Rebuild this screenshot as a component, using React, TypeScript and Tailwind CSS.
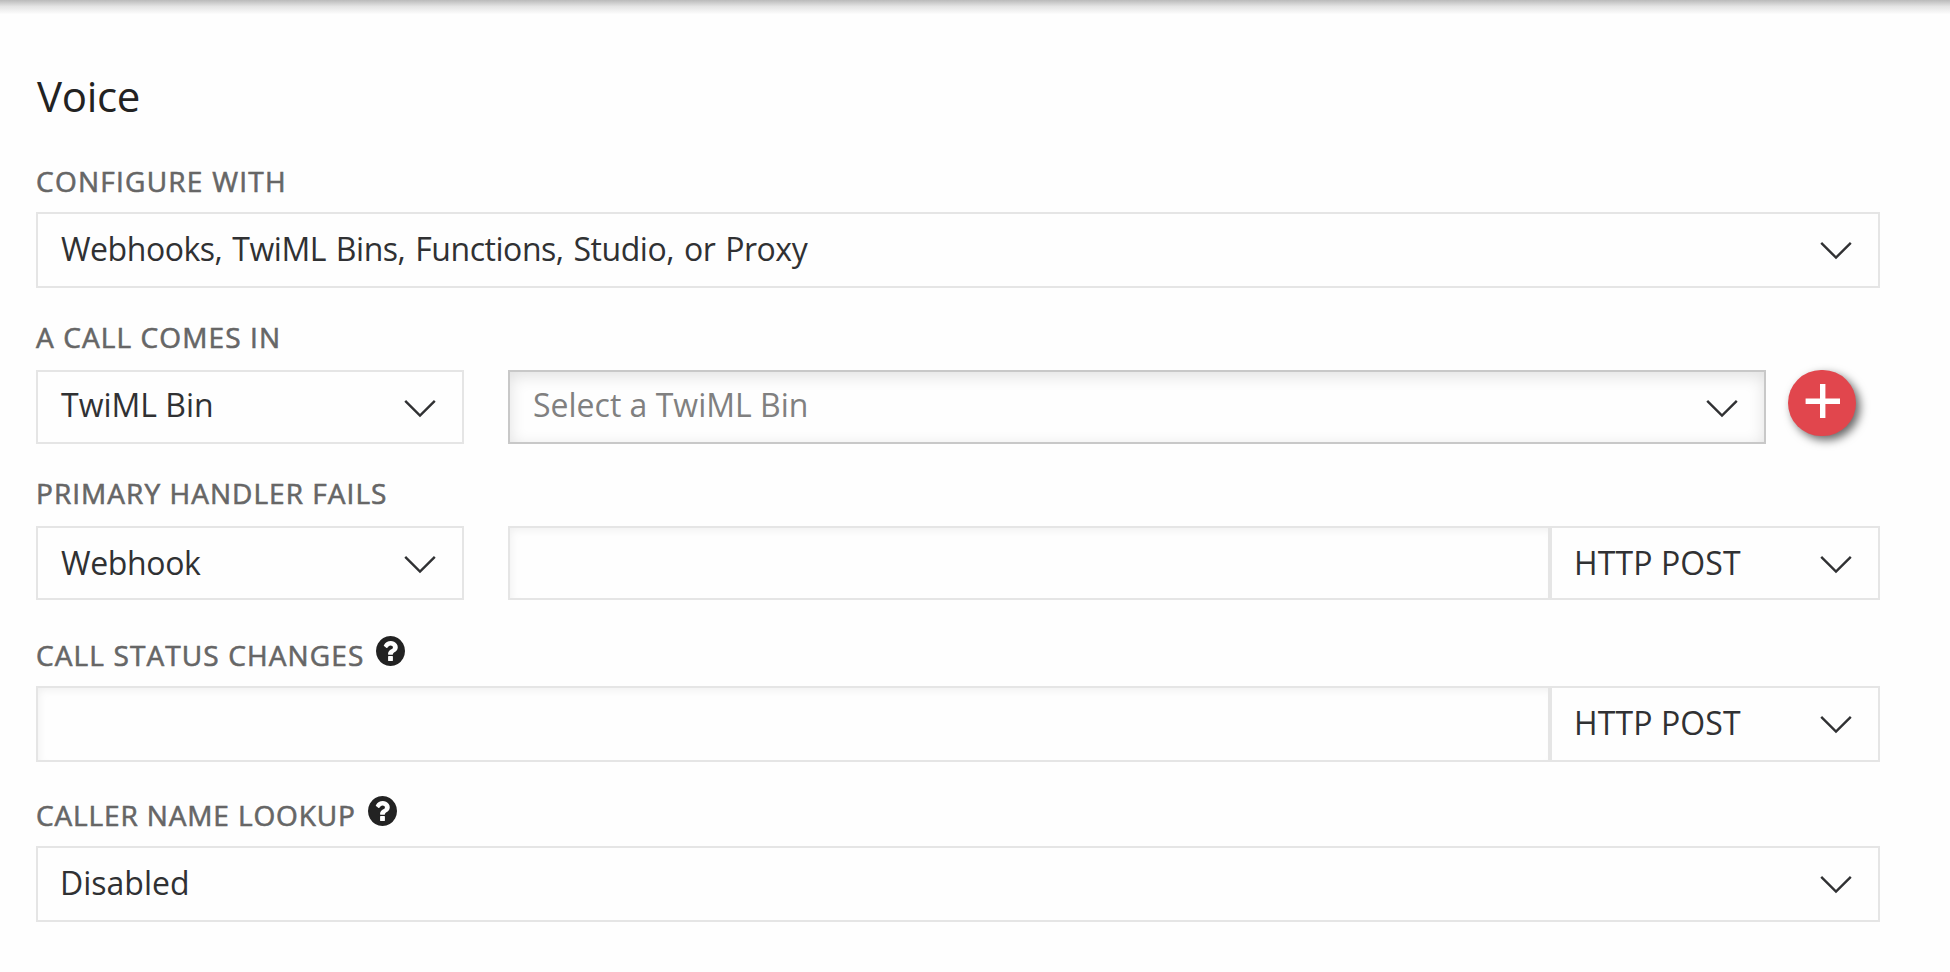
import type { ReactNode } from 'react';
import clsx from 'clsx';

function Chevron() {
  return (
    <svg className="mt-[27px] h-5 w-8 shrink-0" viewBox="0 0 32 20" fill="none" stroke="#303133" strokeWidth="2.4">
      <path d="M1.2 1.8 16 16.6 30.8 1.8" />
    </svg>
  );
}

function HelpIcon() {
  return (
    <svg
      className="-mt-[5px] h-[30px] w-[29px] shrink-0"
      viewBox="128 128 1536 1536"
      preserveAspectRatio="none"
      fill="#222222"
    >
      <path d="M1024 1376v-192q0-14-9-23t-23-9h-192q-14 0-23 9t-9 23v192q0 14 9 23t23 9h192q14 0 23-9t9-23zm256-672q0-88-55.5-163t-138.5-116-170-41q-243 0-371 213-15 24 8 42l132 100q7 6 19 6 16 0 25-12 53-68 86-92 34-24 86-24 48 0 85.5 26t37.5 59q0 38-20 61t-68 45q-63 28-115.5 86.5t-52.5 125.5v36q0 14 9 23t23 9h192q14 0 23-9t9-23q0-19 21.5-49.5t54.5-49.5q32-18 49-28.5t46-35 44.5-48 28-60.5 12.5-81zm384 192q0 209-103 385.5t-279.5 279.5-385.5 103-385.5-103-279.5-279.5-103-385.5 103-385.5 279.5-279.5 385.5-103 385.5 103 279.5 279.5 103 385.5z" />
    </svg>
  );
}

function Label({ children, className, help }: { children: ReactNode; className: string; help?: boolean }) {
  return (
    <div
      className={clsx(
        'flex h-7 items-start text-[28px] leading-7 whitespace-nowrap text-[#666666] [-webkit-text-stroke:0.6px_#666666]',
        className,
      )}
    >
      <span>{children}</span>
      {help && <HelpIcon />}
    </div>
  );
}

function Select({
  value,
  className,
  textClass = 'pt-[13px]',
  focused,
}: {
  value: string;
  className: string;
  textClass?: string;
  focused?: boolean;
}) {
  return (
    <button
      type="button"
      className={clsx(
        'flex items-start justify-between border-2 pr-[26px] pl-[22px] text-left text-[32px] leading-[44px] whitespace-nowrap',
        focused
          ? 'border-[#c8c8c8] text-[#808080] shadow-[inset_0_4px_16px_rgba(0,0,0,0.12)]'
          : 'border-[#e5e5e5] text-[#303133]',
        className,
      )}
    >
      <span className={textClass}>{value}</span>
      <Chevron />
    </button>
  );
}

function TextInput({ className, label }: { className: string; label: string }) {
  return (
    <input
      aria-label={label}
      className={clsx(
        'min-w-0 border-2 border-[#e5e5e5] bg-transparent px-6 text-[32px] shadow-[inset_3px_4px_8px_-2px_rgba(0,0,0,0.06)] outline-none',
        className,
      )}
    />
  );
}

export default function App() {
  return (
    <main className="h-[972px] w-[1950px] overflow-hidden bg-[#fefefe] font-['Open_Sans',sans-serif]">
      <div className="h-4 bg-linear-to-b from-[#bababa] via-[#e4e4e4] via-40% to-[#fefefe] to-90%" />
      <section className="flex w-[1880px] flex-col pt-14 pl-9">
        <h1 className="ml-[1px] text-[42px] leading-[48px] tracking-[-0.3px] text-[#222222]">Voice</h1>

        <Label className="mt-[47px] mb-[17px] tracking-[1.25px]">CONFIGURE WITH</Label>
        <Select
          value="Webhooks, TwiML Bins, Functions, Studio, or Proxy"
          className="h-[76px]"
          textClass="pt-[13px] pl-px tracking-[-0.46px] [word-spacing:2px]"
        />

        <Label className="mt-[35px] mb-[19px] tracking-[1.11px]">A CALL COMES IN</Label>
        <div className="flex">
          <Select value="TwiML Bin" className="h-[74px] w-[428px]" textClass="pt-[11px] pl-px" />
          <Select value="Select a TwiML Bin" className="ml-11 h-[74px] w-[1258px]" textClass="pt-[11px] pl-px" focused />
          <button
            type="button"
            aria-label="Add"
            className="ml-[22px] h-[66px] w-[68px] rounded-[34px] bg-[#e1464d] shadow-[4px_4px_10px_rgba(0,0,0,0.6)]"
          >
            <svg className="h-[66px] w-[68px]" viewBox="0 0 68 66" stroke="#ffffff" strokeWidth="5.4">
              <path d="M17.6 31.2h34.4M34.7 14v34" />
            </svg>
          </button>
        </div>

        <Label className="mt-[35px] mb-[19px] tracking-[1.05px]">PRIMARY HANDLER FAILS</Label>
        <div className="flex">
          <Select value="Webhook" className="h-[74px] w-[428px]" textClass="pt-[13px] pl-px tracking-[-0.35px]" />
          <TextInput label="Fallback URL" className="ml-11 h-[74px] flex-1" />
          <Select value="HTTP POST" className="h-[74px] w-[330px]" textClass="pt-[13px] tracking-[0.1px]" />
        </div>

        <Label className="mt-[41px] mb-[17px] gap-3 tracking-[1.12px]" help>
          CALL STATUS CHANGES
        </Label>
        <div className="flex">
          <TextInput label="Status callback URL" className="h-[76px] flex-1" />
          <Select value="HTTP POST" className="h-[76px] w-[330px]" textClass="pt-[13px] tracking-[0.1px]" />
        </div>

        <Label className="mt-[39px] mb-[17px] gap-3 tracking-[0.87px]" help>
          CALLER NAME LOOKUP
        </Label>
        <Select value="Disabled" className="h-[76px]" />
      </section>
    </main>
  );
}
